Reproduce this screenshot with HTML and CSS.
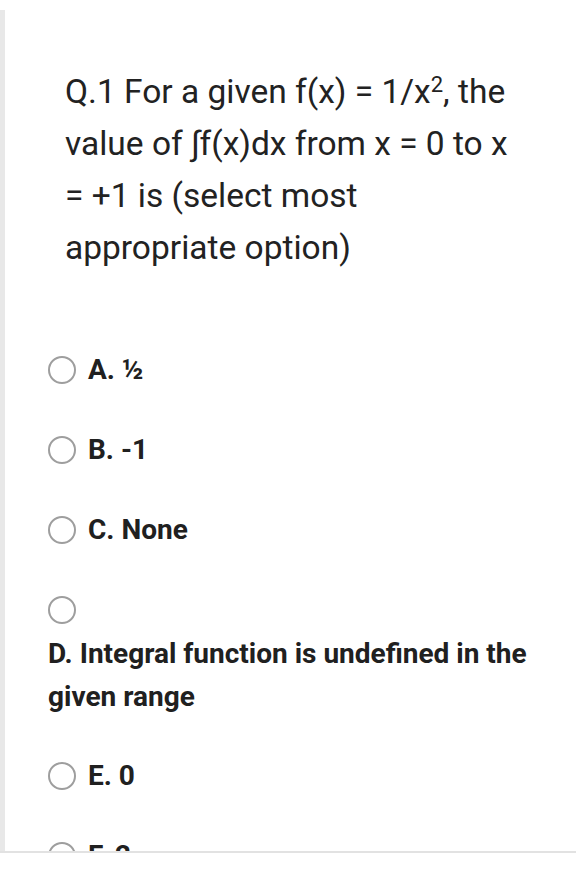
FILE: index.html
```html
<!DOCTYPE html>
<html>
<head>
<meta charset="utf-8">
<link rel="stylesheet" href="styles.css">
</head>
<body>
<div class="viewport">
  <div class="card">
    <div class="question">Q.1 For a given f(x) = 1/x<sup>2</sup>, the value of ∫f(x)dx from x = 0 to x = +1 is (select most appropriate option)</div>
    <div class="options">
      <div class="option"><span class="radio"></span><span class="label">A. ½</span></div>
      <div class="option"><span class="radio"></span><span class="label">B. -1</span></div>
      <div class="option"><span class="radio"></span><span class="label">C. None</span></div>
      <div class="option wrap"><span class="radio"></span><span class="label">D. Integral function is undefined in the given range</span></div>
      <div class="option"><span class="radio"></span><span class="label">E. 0</span></div>
      <div class="option"><span class="radio"></span><span class="label">F. 2</span></div>
    </div>
  </div>
</div>
<div class="bottombar"></div>
</body>
</html>
```
FILE: styles.css
```css
html, body {
  margin: 0;
  padding: 0;
  background: #ffffff;
}
body {
  font-family: Roboto, "Liberation Sans", sans-serif;
  color: #212121;
}
.viewport {
  height: 851px;
  overflow: hidden;
  padding-top: 10px;
  box-sizing: border-box;
}
.card {
  border-left: 5px solid #e8e8e8;
  min-height: 900px;
  padding-top: 56px;
  box-sizing: border-box;
}
.question {
  padding-left: 60px;
  padding-right: 48px;
  font-size: 33.5px;
  line-height: 52px;
  color: #222222;
}
.question sup {
  font-size: 22px;
  line-height: 0;
  vertical-align: 0.5em;
}
.options {
  margin-top: 56px;
  padding-left: 43px;
  padding-right: 30px;
}
.option {
  display: flex;
  align-items: center;
  padding: 26px 0;
}
.option.wrap {
  flex-direction: column;
  align-items: flex-start;
  padding-bottom: 18px;
}
.radio {
  width: 28px;
  height: 28px;
  border: 2px solid #9e9e9e;
  border-radius: 50%;
  box-sizing: border-box;
  flex: none;
}
.label {
  margin-left: 12px;
  font-size: 28px;
  font-weight: 700;
  line-height: 28px;
  color: #202020;
}
.option.wrap .label {
  margin-left: 0;
  margin-top: 8px;
  line-height: 43px;
}
.bottombar {
  border-top: 2px solid #e2e2e2;
  height: 26px;
}
```
